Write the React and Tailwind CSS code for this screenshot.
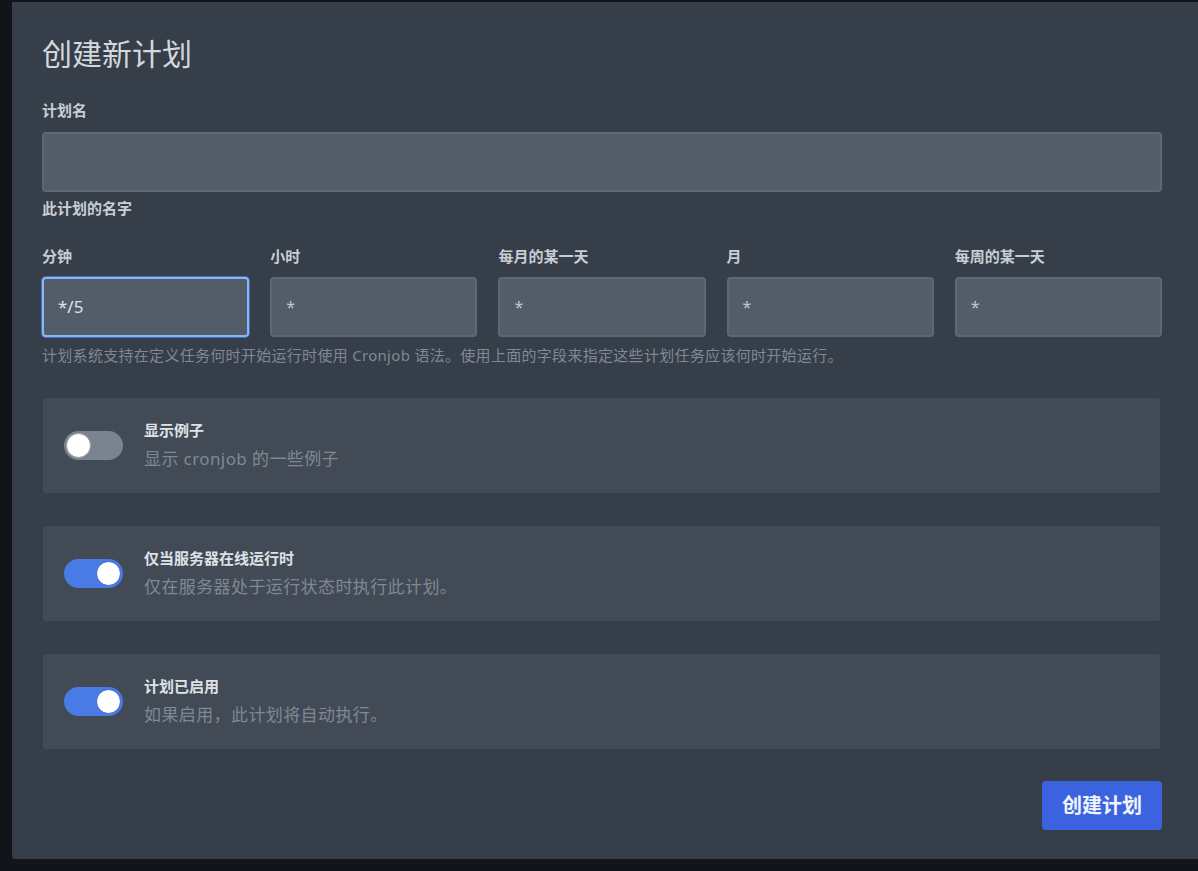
import { useState } from "react";

function Toggle({ on }) {
  return (
    <div
      className={
        "relative h-[29px] w-[59px] shrink-0 rounded-full " +
        (on ? "bg-[#4a7ae6]" : "bg-[#7b838e]")
      }
    >
      <div
        className={
          "absolute top-[2px] h-[25px] w-[25px] rounded-full bg-white " +
          (on ? "right-[2px] border border-[#3a63d8]" : "left-[2px] border border-[#9aa1a9]")
        }
      />
    </div>
  );
}

function OptionCard({ on, title, desc }) {
  return (
    <div className="flex h-[95px] items-center rounded-[3px] bg-[#424a56] pl-[21px] pr-4">
      <Toggle on={on} />
      <div className="ml-[21px] flex flex-col">
        <div className="text-[15px] font-bold leading-[20px] text-[#dfe3e8]">{title}</div>
        <div className="mt-[7px] text-[17px] leading-[24px] tracking-[0.4px] text-[#7f8894]">{desc}</div>
      </div>
    </div>
  );
}

export default function App() {
  const [name, setName] = useState("");
  const fields = [
    ["分钟", "*/5"],
    ["小时", "*"],
    ["每月的某一天", "*"],
    ["月", "*"],
    ["每周的某一天", "*"],
  ];

  return (
    <div
      className="min-h-[871px] w-full bg-[#111418] pt-[2px]"
      style={{ fontFamily: '"Noto Sans", "Noto Sans CJK SC", sans-serif' }}
    >
      <div className="ml-[12px] h-[857px] w-[1186px] rounded-bl-[3px] bg-[#363e4a] pl-[30px] pr-[36px] pt-[32px]">
        <h1 className="text-[30px] leading-[40px] text-[#d4d8dd]">创建新计划</h1>

        <div className="mt-[26px] text-[15px] font-bold leading-[20px] text-[#c9ced4]">计划名</div>
        <input
          value={name}
          onChange={(e) => setName(e.target.value)}
          className="mt-[12px] block h-[60px] w-full rounded-[4px] border-2 border-[#5d6875] bg-[#535d69] px-4 text-[16px] text-[#dfe3e8] outline-none"
        />
        <div className="mt-[6px] text-[15px] font-bold leading-[20px] text-[#c9ced4]">此计划的名字</div>

        <div className="mt-[28px] grid grid-cols-5 gap-x-[21px]">
          {fields.map(([label, value], i) => (
            <div key={label} className="flex flex-col">
              <div className="text-[15px] font-bold leading-[20px] text-[#c9ced4]">{label}</div>
              <div
                className={
                  "mt-[11px] flex h-[60px] items-center rounded-[4px] border-2 bg-[#535d69] px-[14px] " +
                  (i === 0 ? "border-[#8ab4f8] shadow-[0_0_0_1px_#4a6fb0]" : "border-[#5d6875]")
                }
              >
                <span className={i === 0 ? "text-[17px] text-[#dfe3e8]" : "text-[16px] text-[#c0c6cd]"}>{value}</span>
              </div>
            </div>
          ))}
        </div>
        <div className="mt-[8px] text-[15px] leading-[20px] tracking-[0.3px] text-[#7f8894]">
          计划系统支持在定义任务何时开始运行时使用 Cronjob 语法。使用上面的字段来指定这些计划任务应该何时开始运行。
        </div>

        <div className="mt-[33px] flex flex-col gap-[33px] pl-[1px] pr-[2px]">
          <OptionCard on={false} title="显示例子" desc="显示 cronjob 的一些例子" />
          <OptionCard on title="仅当服务器在线运行时" desc="仅在服务器处于运行状态时执行此计划。" />
          <OptionCard on title="计划已启用" desc="如果启用，此计划将自动执行。" />
        </div>

        <div className="mt-[32px] flex justify-end">
          <button className="h-[49px] w-[120px] rounded-[4px] bg-[#3b63e0] text-[20px] font-bold text-[#f1f4fb]">
            创建计划
          </button>
        </div>
      </div>
    </div>
  );
}
